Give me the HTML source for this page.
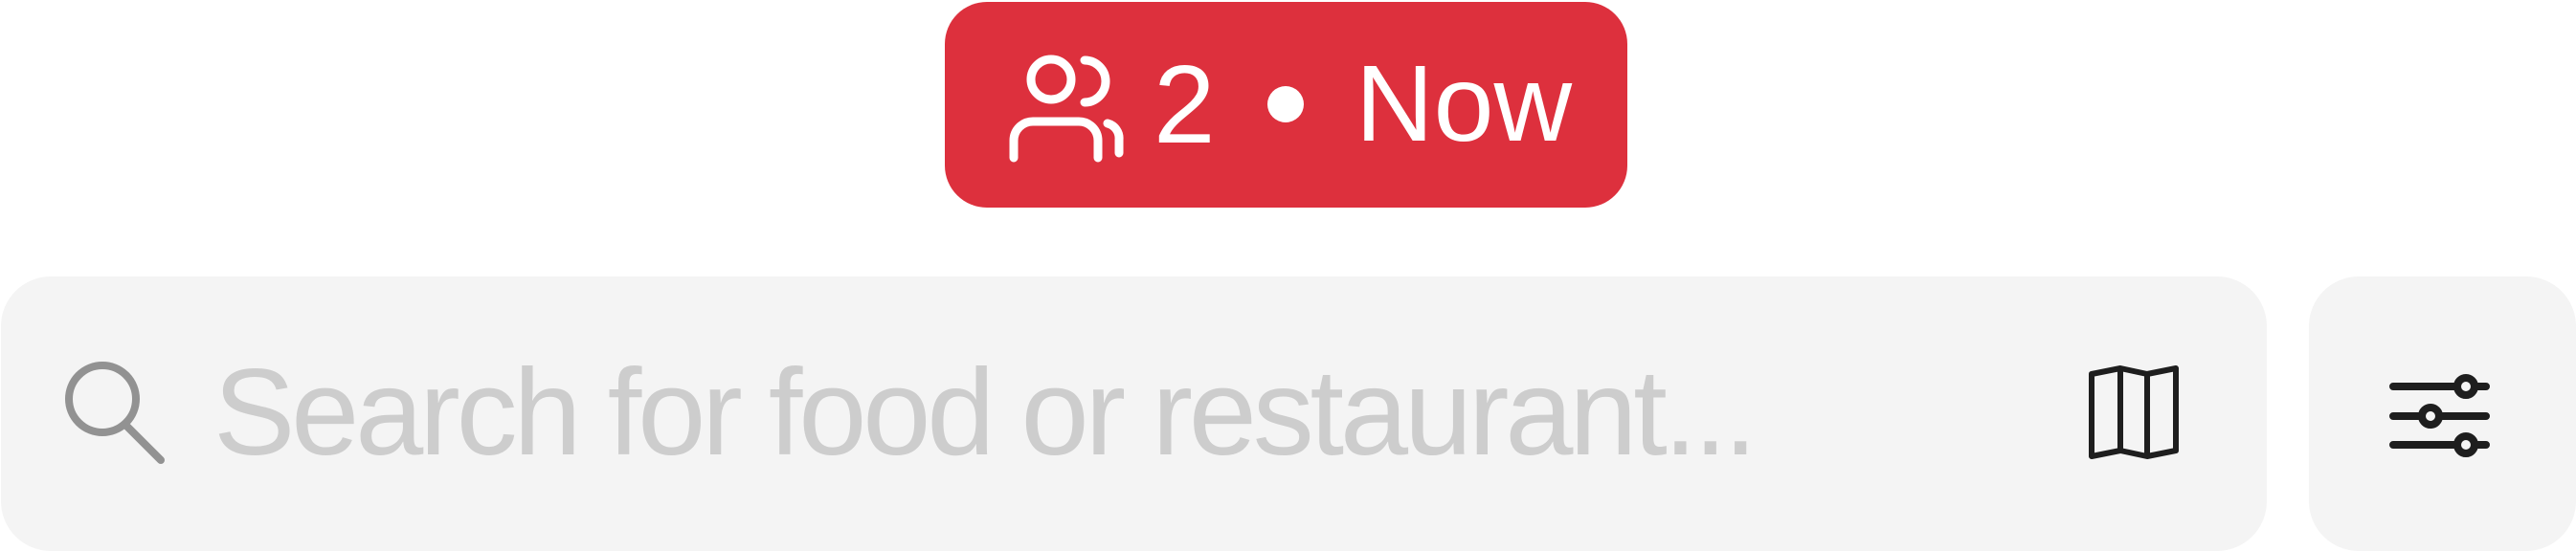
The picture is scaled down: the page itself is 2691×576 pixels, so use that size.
<!DOCTYPE html>
<html><head><style>
html,body{margin:0;padding:0;width:2691px;height:576px;background:#fff;overflow:hidden;font-family:"Liberation Sans",sans-serif;}
.pill{position:absolute;left:987px;top:2px;width:713px;height:215px;background:#dd303d;border-radius:44px;}
.pill .t{position:absolute;color:#fff;line-height:1;white-space:nowrap;}
.bar{position:absolute;left:1px;top:289px;width:2367px;height:287px;background:#f4f4f4;border-radius:52px;}
.flt{position:absolute;left:2412px;top:289px;width:279px;height:287px;background:#f4f4f4;border-radius:52px;}
.ph{position:absolute;left:222px;top:79px;font-size:128px;line-height:1;color:#cdcdcd;white-space:nowrap;letter-spacing:-4.2px;}
svg{position:absolute;left:0;top:0;}
</style></head><body>
<div class="pill">
<svg width="713" height="215" fill="none" stroke="#fff" stroke-width="9" stroke-linecap="round">
<circle cx="111" cy="81" r="21"/>
<path d="M146 61a22 22 0 0 1 0 44"/>
<path d="M72 163v-18a20 20 0 0 1 20-20h48a20 20 0 0 1 20 20v18"/>
<path d="M170 127a16 16 0 0 1 12 17v14"/>
<circle cx="356" cy="107" r="19" fill="#fff" stroke="none"/>
</svg>
<div class="t" style="left:218px;top:49px;font-size:116px">2</div>
<div class="t" style="left:429px;top:50px;font-size:113px">Now</div>
</div>
<div class="bar">
<svg width="300" height="287" fill="none" stroke="#929292" stroke-width="8" stroke-linecap="round">
<circle cx="106" cy="128" r="35"/>
<path d="M131 156l36 36"/>
</svg>
<div class="ph">Search for food or restaurant...</div>
<svg style="left:2170px;top:80px" width="120" height="120" fill="none" stroke="#1e1e1e" stroke-width="6" stroke-linejoin="round">
<path d="M14 22l30-6 28 6 30-6v86l-30 6-28-6-30 6z"/>
<path d="M44 16v86M72 22v86"/>
</svg>
</div>
<div class="flt">
<svg style="left:70px;top:95px" width="140" height="100" fill="none" stroke="#1e1e1e" stroke-width="8" stroke-linecap="round">
<path d="M18 20h67M103 20h12M18 51h30M66 51h49M18 81h67M103 81h12"/>
<circle cx="94" cy="20" r="9"/><circle cx="57" cy="51" r="9"/><circle cx="94" cy="81" r="9"/>
</svg>
</div>
</body></html>
